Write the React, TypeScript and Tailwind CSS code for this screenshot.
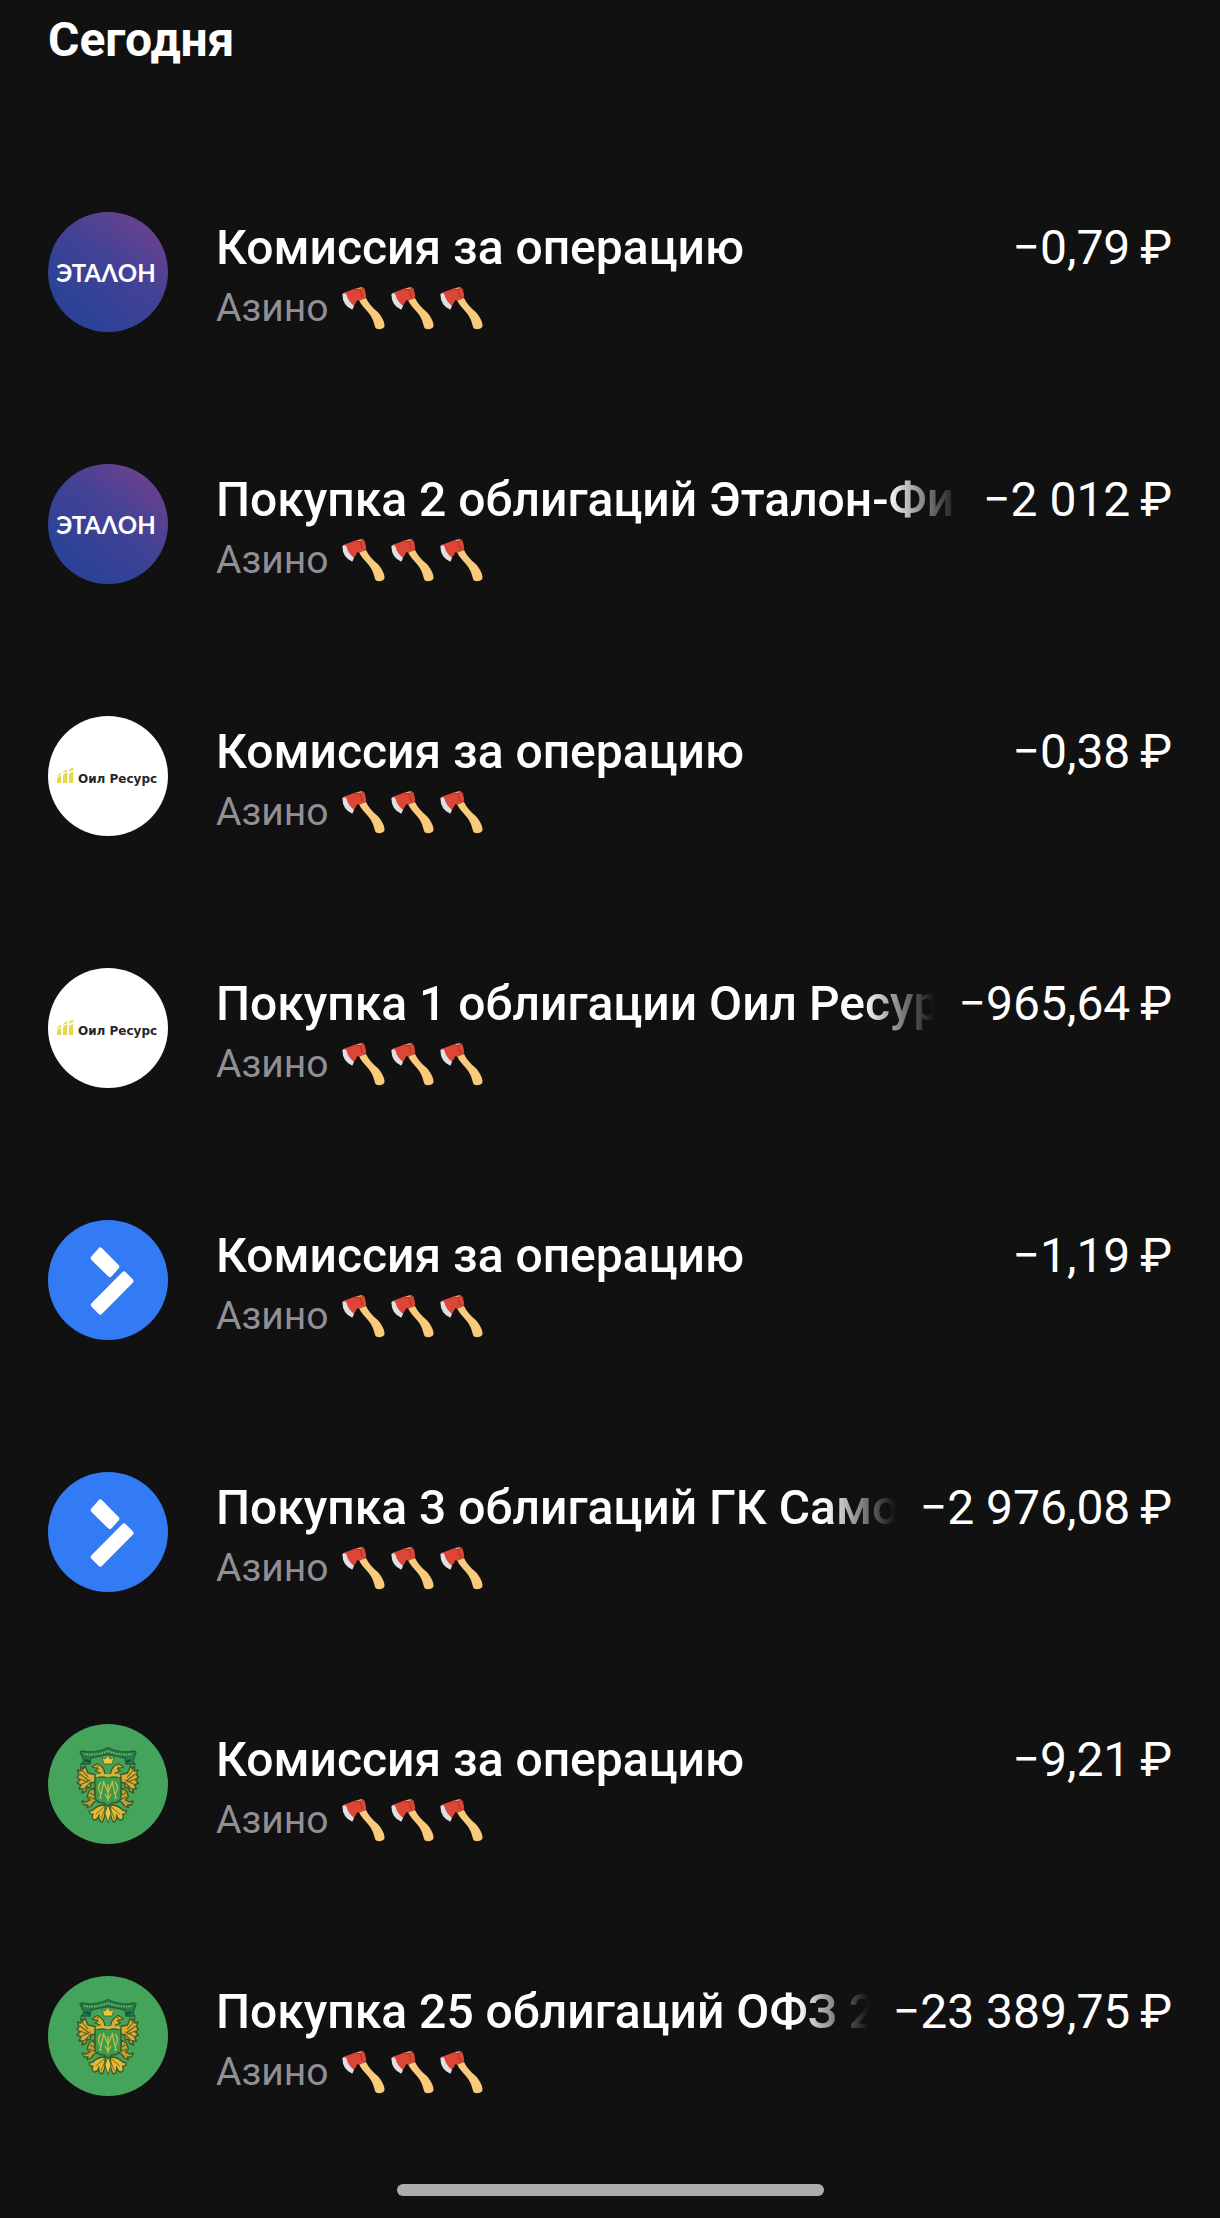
// ============================================================
// Operations feed
// Shows today's brokerage operations: commission and bond
// purchase rows, each with issuer logo, account and amount.
// ============================================================

import type { ReactNode } from "react";

type Issuer = "etalon" | "oil" | "samolet" | "ofz";

interface Operation {
  id: number;
  issuer: Issuer;
  title: string;
  amount: string;
}

const OPERATIONS: Operation[] = [
  { id: 1, issuer: "etalon", title: "Комиссия за операцию", amount: "−0,79" },
  { id: 2, issuer: "etalon", title: "Покупка 2 облигаций Эталон-Фин", amount: "−2 012" },
  { id: 3, issuer: "oil", title: "Комиссия за операцию", amount: "−0,38" },
  { id: 4, issuer: "oil", title: "Покупка 1 облигации Оил Ресур", amount: "−965,64" },
  { id: 5, issuer: "samolet", title: "Комиссия за операцию", amount: "−1,19" },
  { id: 6, issuer: "samolet", title: "Покупка 3 облигаций ГК Само", amount: "−2 976,08" },
  { id: 7, issuer: "ofz", title: "Комиссия за операцию", amount: "−9,21" },
  { id: 8, issuer: "ofz", title: "Покупка 25 облигаций ОФЗ 2", amount: "−23 389,75" },
];

function EtalonLogo() {
  return (
    <svg viewBox="0 0 120 120" className="size-full">
      <defs>
        <linearGradient id="etalon-bg" x1="0.3" y1="0.85" x2="0.92" y2="0.08">
          <stop offset="0" stopColor="#2c4297" />
          <stop offset="0.5" stopColor="#444296" />
          <stop offset="1" stopColor="#6f418c" />
        </linearGradient>
      </defs>
      <rect width="120" height="120" fill="url(#etalon-bg)" />
      <text x="58" y="70" textAnchor="middle" fill="#fff" className="font-[Lato,Inter,sans-serif] text-[24px] font-bold">
        ЭТАΛОН
      </text>
    </svg>
  );
}

function OilLogo() {
  return (
    <svg viewBox="0 0 120 120" className="size-full">
      <rect width="120" height="120" fill="#fff" />
      <g fill="#e3d94f">
        <path d="M9 63q0-2.500 4.200-3.300V67H9z" />
        <path d="M15 60q0-2.500 4.300-3.400V67H15z" />
        <path d="M21 58.500q0-2 4.200-2.600V67H21z" />
        <path d="M21 55q0-2.300 4.200-3.300v2.600q-2.700.2-4.200 1.600z" />
        <path d="M9 61q0-3 4.200-4v2q-2.700.2-4.200 2zM15 57.500q0-3 4.300-4v2q-2.700.2-4.300 2z" />
      </g>
      <text x="30" y="67" fill="#25262b" className="font-['DejaVu_Sans',sans-serif] text-[12px] font-bold">
        Оил Ресурс
      </text>
    </svg>
  );
}

function SamoletLogo() {
  return (
    <svg viewBox="0 0 120 120" className="size-full">
      <rect width="120" height="120" fill="#337af5" />
      <g fill="#fff" stroke="#fff" strokeWidth="5" strokeLinejoin="round">
        <path d="M52.300 30 68.800 46.800 61.800 54.500 45.300 38.200z" />
        <path d="M76 54 83 61 52.300 92 45.300 85z" />
      </g>
    </svg>
  );
}

// One half of the eagle, the other half is mirrored around x = 60
function EagleHalf() {
  return (
    <g strokeLinejoin="round" strokeLinecap="round">
      {/* wing */}
      <path
        d="M49 52 45 50 40 49 37 42 35 45 33 42 33 47 29.500 46 31 51 29 53 32 56 29 59 33 61 31 65 35 65 34 69 38 67 39 63 42 64 43 59 47 58z"
        fill="#d9ac32"
        stroke="#3c5a26"
        strokeWidth="1.500"
      />
      <path d="M34 46 40 53M32 50 40 56M32 55 40 58M34 60 42 56M36 65 43 58" stroke="#59602a" strokeWidth="1.100" fill="none" />
      {/* head and neck */}
      <path
        d="M57 52Q57 45 53 42Q50 38 47 41L44 43 47 44Q49 43 50 45L47 47 52 49 53 52z"
        fill="#d9ac32"
        stroke="#3c5a26"
        strokeWidth="1.200"
      />
      <circle cx="50" cy="41.500" r="0.800" fill="#2d5128" />
      {/* leg and claw */}
      <path
        d="M46 64 41 67 39 73 42 76 38 78 34 77 36 81 40 81 39 84 43 82 46 78 49 77 47 72z"
        fill="#c49e31"
        stroke="#3c5a26"
        strokeWidth="1.300"
      />
      <path d="M42 69 46 71M41 73 46 75" stroke="#3f5b26" strokeWidth="1" />
      {/* tail feathers */}
      <path
        d="M57 81Q49 81 45 86L41 87Q42 91 45 90Q43 94 46 96Q50 96 51 91Q50 97 54 98Q57 94 57 88z"
        fill="#e3ba36"
        stroke="#3c5a26"
        strokeWidth="1.300"
      />
      <path d="M56 83 48 90M57 85 53 95" stroke="#657033" strokeWidth="1" />
    </g>
  );
}

function OfzLogo() {
  return (
    <svg viewBox="0 0 120 120" className="size-full">
      <rect width="120" height="120" fill="#45a45b" />
      {/* ribbon */}
      <path
        d="M34 27Q47 30 60 23.500Q73 30 86 27L88 28 85 37 87 40 78 40 77 34Q68 32 60 30.500Q52 32 43 34L42 40 33 40 36 37 32 28z"
        fill="#257d49"
        stroke="#1e6239"
        strokeWidth="1.300"
      />
      <path d="M36 30Q48 32 60 27Q72 32 84 30" stroke="#85b75c" strokeWidth="1.700" strokeDasharray="1.500 1" fill="none" />
      <path d="M37 36 42 38M83 36 78 38" stroke="#174e38" strokeWidth="2" />
      <EagleHalf />
      <g transform="translate(119.500 0) scale(-1 1)">
        <EagleHalf />
      </g>
      {/* central feather */}
      <path d="M60 80 63 89 60 99 57 89z" fill="#efc83b" stroke="#4d672d" strokeWidth="1" />
      {/* crown */}
      <path d="M54 33 57 35 60 31 62 35 66 33 64 40H56z" fill="#f1c637" stroke="#45662c" strokeWidth="0.800" />
      {/* shield */}
      <path d="M47 53H73V75Q70 79 64 79L60 82 56 79Q50 79 47 75z" fill="#399c50" stroke="#315f32" strokeWidth="1.500" />
      <path d="M48 52Q54 50 60 52Q66 50 72 52" stroke="#d8b440" strokeWidth="2.500" fill="none" />
      <g stroke="#d0bd42" strokeWidth="1.200" fill="none">
        <path d="M52 74 56 57M68 74 64 57M55 57 60 68 65 57M51 74H54M66 74H69" />
        <path d="M53 58Q48 64 53 70M67 58Q72 64 67 70" />
        <path d="M60 60V77M57 70 60 75 63 70" />
      </g>
    </svg>
  );
}

const LOGOS: Record<Issuer, ReactNode> = {
  etalon: <EtalonLogo />,
  oil: <OilLogo />,
  samolet: <SamoletLogo />,
  ofz: <OfzLogo />,
};

function Axe() {
  return (
    <svg viewBox="0 0 147 132" className="h-11 w-[49px]" aria-hidden="true">
      <path
        d="M54 42C60 56 69 64 80 77 95 94 97 104 102 122 105 133 126 131 130 122 133 111 122 91 111 79 95 66 83 52 75 36z"
        fill="#f8ca7a"
      />
      <path d="M6 24Q8 18 13 19L45 7 64 3Q72 6 73 16L76 33Q67 42 55 44L49 42Q45 52 38 61L32 64Q11 50 6 24z" fill="#dc4637" />
      <path d="M55 5 64 34" stroke="#ad3028" strokeWidth="3" />
      <path d="M42 8 64 2 69 7 47 13z" fill="#9e2c25" />
      <path d="M46 8 62 4 64 7 50 10z" fill="#f2bd78" />
      <path d="M4 25Q9 18 16 25 21 46 39 60L34 71Q5 60 4 25z" fill="#dedee5" />
    </svg>
  );
}

function OperationRow({ operation }: { operation: Operation }) {
  return (
    <li className="flex items-start gap-12 pt-[66px] pb-[60px]">
      <div className="size-[120px] shrink-0 overflow-hidden rounded-full">{LOGOS[operation.issuer]}</div>

      <div className="min-w-0 flex-1 pt-[6px]">
        <div className="flex gap-6 text-[48px] leading-[60px]">
          {/* Long titles fade out before the amount */}
          <h2 className="min-w-0 flex-1 overflow-hidden font-medium whitespace-nowrap [mask-image:linear-gradient(to_right,#000_calc(100%-72px),transparent)]">
            {operation.title}
          </h2>
          <p className="shrink-0 whitespace-nowrap">
            {operation.amount}
            {"\u2009₽"}
          </p>
        </div>
        <p className="flex items-center gap-3 text-[39px] leading-[60px] text-[#8f9096]">
          Азино
          <span className="flex">
            <Axe />
            <Axe />
            <Axe />
          </span>
        </p>
      </div>
    </li>
  );
}

export default function App() {
  return (
    <main className="min-h-screen bg-[#111111] font-[Roboto,sans-serif] text-white">
      <section className="px-12">
        <h1 className="h-[146px] pt-[10px] text-[48px] leading-[60px] font-bold">Сегодня</h1>
        <ul>
          {OPERATIONS.map((operation) => (
            <OperationRow key={operation.id} operation={operation} />
          ))}
        </ul>
      </section>

      {/* Gesture bar */}
      <div className="py-[22px]">
        <div className="mx-auto h-3 w-[35%] rounded-full bg-[#adadad]" />
      </div>
    </main>
  );
}
